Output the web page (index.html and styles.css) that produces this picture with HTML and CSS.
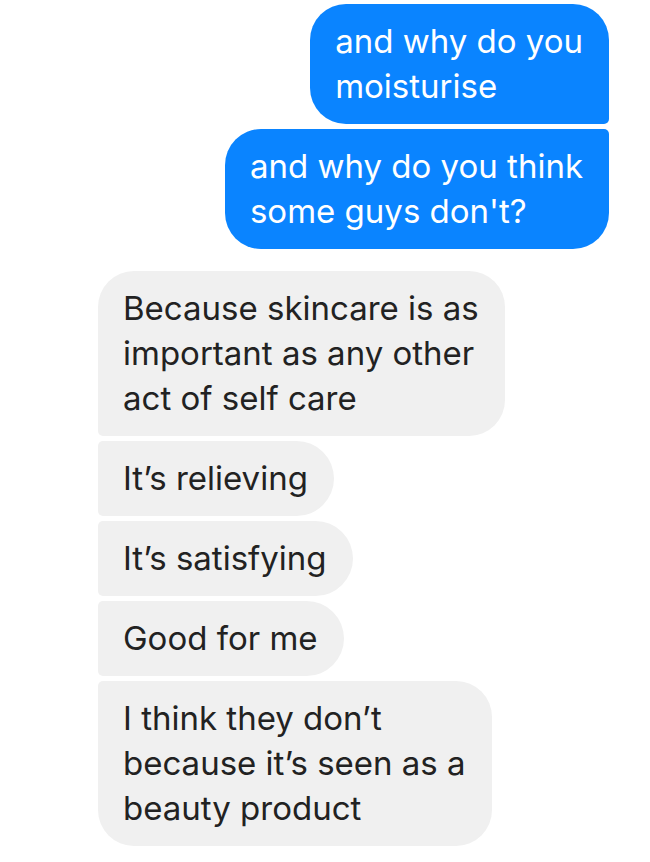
FILE: index.html
```html
<!DOCTYPE html>
<html lang="en">
<head>
    <meta charset="UTF-8">
    <meta name="viewport" content="width=device-width, initial-scale=1.0">
    <title>Chat</title>
    <link rel="stylesheet" href="styles.css">
</head>
<body>
    <div class="thread">
        <div class="msg sent first">and why do you<br>moisturise</div>
        <div class="msg sent last">and why do you think<br>some guys don't?</div>

        <div class="msg received first">Because skincare is as<br>important as any other<br>act of self care</div>
        <div class="msg received middle">It’s relieving</div>
        <div class="msg received middle">It’s satisfying</div>
        <div class="msg received middle">Good for me</div>
        <div class="msg received last">I think they don’t<br>because it’s seen as a<br>beauty product</div>
    </div>
</body>
</html>
```

FILE: styles.css
```css
body {
    margin: 0;
    background: #fff;
    font-family: Inter, "Liberation Sans", Arial, sans-serif;
}
.thread {
    display: flex;
    flex-direction: column;
    gap: 5px;
    padding: 4px 41px 0 98px;
}
.msg {
    font-size: 33px;
    line-height: 45px;
    padding: 15px 26px 15px 25px;
    white-space: nowrap;
}
.sent {
    align-self: flex-end;
    background-color: #0a84ff;
    color: #fff;
}
.sent.first {
    border-radius: 36px 36px 5px 36px;
}
.sent.last {
    border-radius: 36px 5px 36px 36px;
}
.received {
    align-self: flex-start;
    background-color: #f0f0f0;
    color: #222;
}
.sent.last + .received {
    margin-top: 17px;
}
.received.first {
    border-radius: 36px 36px 36px 5px;
}
.received.middle {
    border-radius: 5px 38px 38px 5px;
}
.received.last {
    border-radius: 5px 36px 36px 36px;
}
```
